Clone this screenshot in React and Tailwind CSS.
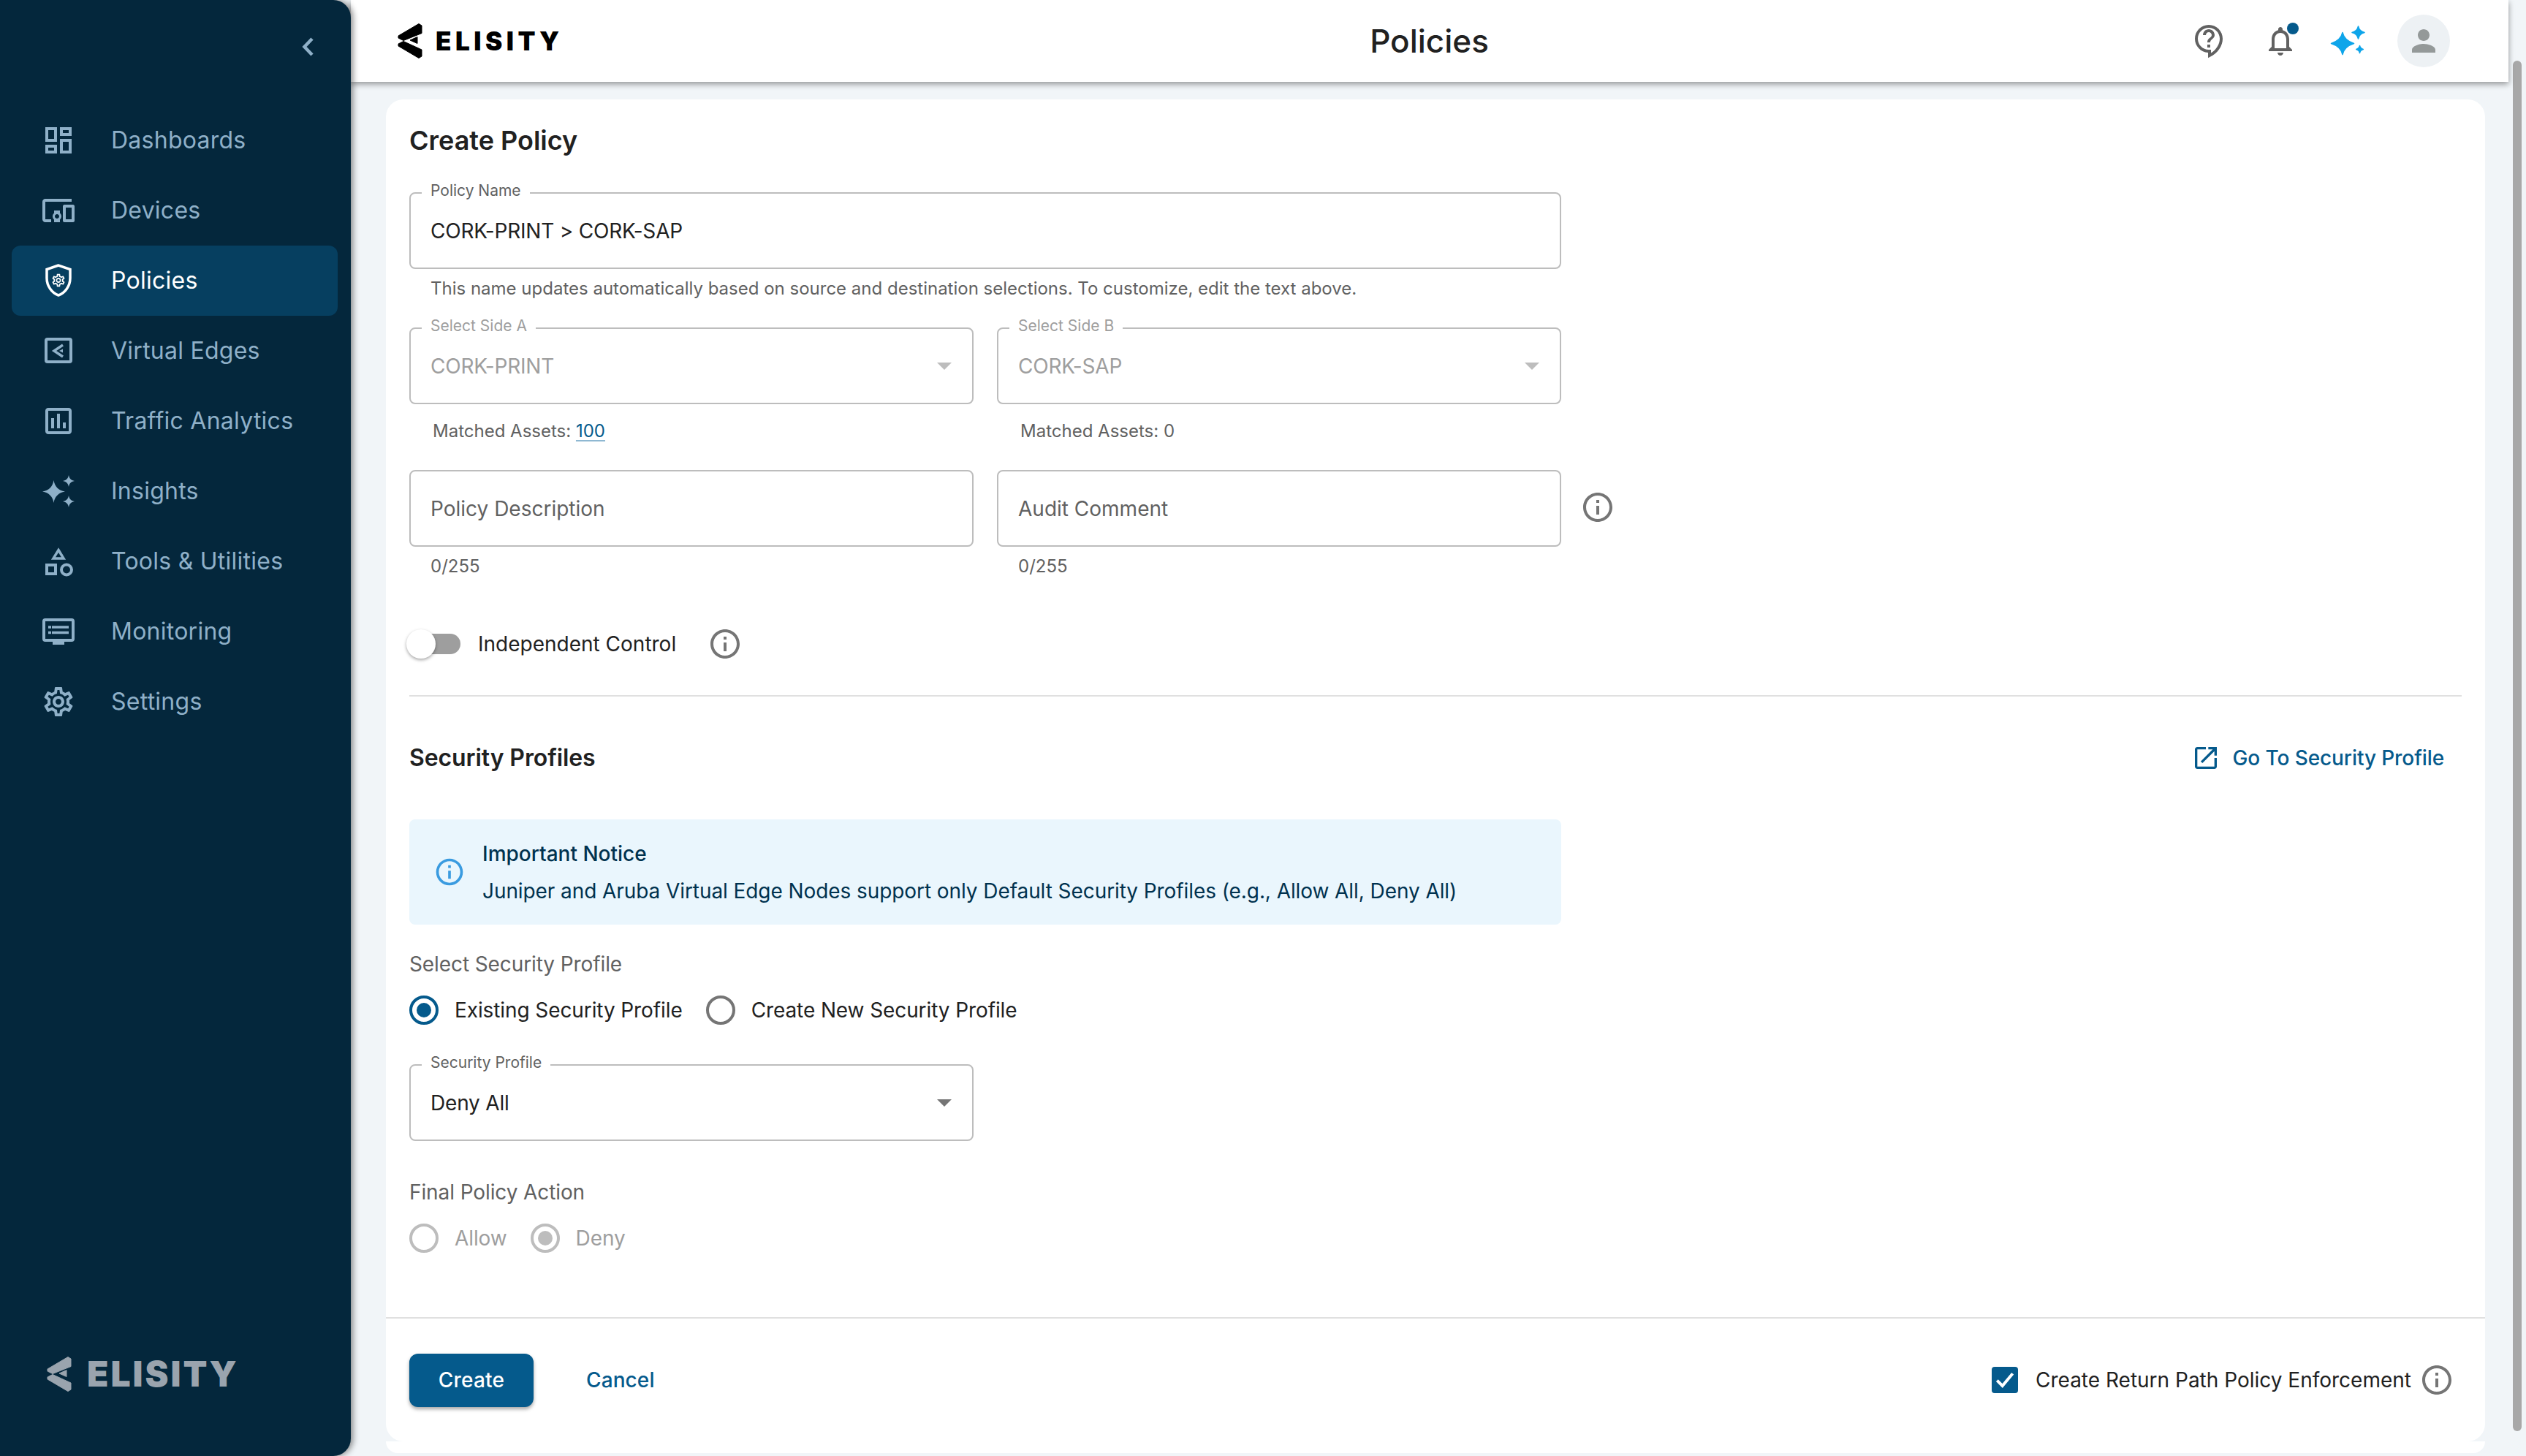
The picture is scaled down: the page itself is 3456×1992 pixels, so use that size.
const paths = {
  dashboard: "M19 5v2h-4V5h4M9 5v6H5V5h4m10 8v6h-4v-6h4M9 17v2H5v-2h4M21 3h-8v6h8V3zM11 3H3v10h8V3zm10 8h-8v10h8V11zm-10 4H3v6h8v-6z",
  devices: "M3 6h18V4H3c-1.1 0-2 .9-2 2v12c0 1.1.9 2 2 2h4v-2H3V6zm10 6H9v1.78c-.61.55-1 1.33-1 2.22s.39 1.67 1 2.22V20h4v-1.78c.61-.55 1-1.34 1-2.22s-.39-1.67-1-2.22V12zm-2 5.5c-.83 0-1.5-.67-1.5-1.5s.67-1.5 1.5-1.5 1.5.67 1.5 1.5-.67 1.5-1.5 1.5zM22 8h-6c-.5 0-1 .5-1 1v10c0 .5.5 1 1 1h6c.5 0 1-.5 1-1V9c0-.5-.5-1-1-1zm-1 10h-4v-8h4v8z",
  assessment: "M19 3H5c-1.1 0-2 .9-2 2v14c0 1.1.9 2 2 2h14c1.1 0 2-.9 2-2V5c0-1.1-.9-2-2-2zm0 16H5V5h14v14zM7 10h2v7H7zm4-3h2v10h-2zm4 6h2v4h-2z",
  settings: "M19.43 12.98c.04-.32.07-.64.07-.98 0-.34-.03-.66-.07-.98l2.11-1.65c.19-.15.24-.42.12-.64l-2-3.46c-.09-.16-.26-.25-.44-.25-.06 0-.12.01-.17.03l-2.49 1c-.52-.4-1.08-.73-1.69-.98l-.38-2.65C14.46 2.18 14.25 2 14 2h-4c-.25 0-.46.18-.49.42l-.38 2.65c-.61.25-1.17.59-1.69.98l-2.49-1c-.06-.02-.12-.03-.18-.03-.17 0-.34.09-.43.25l-2 3.46c-.13.22-.07.49.12.64l2.11 1.65c-.04.32-.07.65-.07.98 0 .33.03.66.07.98l-2.11 1.65c-.19.15-.24.42-.12.64l2 3.46c.09.16.26.25.44.25.06 0 .12-.01.17-.03l2.49-1c.52.4 1.08.73 1.69.98l.38 2.65c.03.24.24.42.49.42h4c.25 0 .46-.18.49-.42l.38-2.65c.61-.25 1.17-.59 1.69-.98l2.49 1c.06.02.12.03.18.03.17 0 .34-.09.43-.25l2-3.46c.12-.22.07-.49-.12-.64l-2.11-1.65zm-1.98-1.71c.04.31.05.52.05.73 0 .21-.02.43-.05.73l-.14 1.13.89.7 1.08.84-.7 1.21-1.27-.51-1.04-.42-.9.68c-.43.32-.84.56-1.25.73l-1.06.43-.16 1.13-.2 1.35h-1.4l-.19-1.35-.16-1.13-1.06-.43c-.43-.18-.83-.41-1.23-.71l-.91-.7-1.06.43-1.27.51-.7-1.21 1.08-.84.89-.7-.14-1.13c-.03-.31-.05-.54-.05-.74s.02-.43.05-.73l.14-1.13-.89-.7-1.08-.84.7-1.21 1.27.51 1.04.42.9-.68c.43-.32.84-.56 1.25-.73l1.06-.43.16-1.13.2-1.35h1.39l.19 1.35.16 1.13 1.06.43c.43.18.83.41 1.23.71l.91.7 1.06-.43 1.27-.51.7 1.21-1.07.85-.89.7.14 1.13zM12 8c-2.21 0-4 1.79-4 4s1.79 4 4 4 4-1.79 4-4-1.79-4-4-4zm0 6c-1.1 0-2-.9-2-2s.9-2 2-2 2 .9 2 2-.9 2-2 2z",
  help: "M11 23.59v-3.6c-5.01-.26-9-4.42-9-9.49C2 5.26 6.26 1 11.5 1S21 5.26 21 10.5c0 4.95-3.44 9.93-8.57 12.4l-1.43.69zM11.5 3C7.36 3 4 6.36 4 10.5S7.36 18 11.5 18H13v2.3c3.64-2.3 6-6.08 6-9.8C19 6.36 15.64 3 11.5 3zm-1 11.5h2v2h-2zm2-1.5h-2c0-3.25 3-3 3-5 0-1.1-.9-2-2-2s-2 .9-2 2h-2c0-2.21 1.79-4 4-4s4 1.79 4 4c0 2.5-3 2.75-3 5z",
  bell: "M12 22c1.1 0 2-.9 2-2h-4c0 1.1.9 2 2 2zm6-6v-5c0-3.07-1.63-5.64-4.5-6.32V4c0-.83-.67-1.5-1.5-1.5s-1.5.67-1.5 1.5v.68C7.64 5.36 6 7.92 6 11v5l-2 2v1h16v-1l-2-2zm-2 1H8v-6c0-2.48 1.51-4.5 4-4.5s4 2.02 4 4.5v6z",
  person: "M12 12c2.21 0 4-1.79 4-4s-1.79-4-4-4-4 1.79-4 4 1.79 4 4 4zm0 2c-2.67 0-8 1.34-8 4v2h16v-2c0-2.66-5.33-4-8-4z",
  info: "M11 7h2v2h-2zm0 4h2v6h-2zm1-9C6.48 2 2 6.48 2 12s4.48 10 10 10 10-4.48 10-10S17.52 2 12 2zm0 18c-4.41 0-8-3.59-8-8s3.59-8 8-8 8 3.59 8 8-3.59 8-8 8z",
  open: "M19 19H5V5h7V3H5c-1.11 0-2 .9-2 2v14c0 1.1.89 2 2 2h14c1.1 0 2-.9 2-2v-7h-2v7zM14 3v2h3.59l-9.83 9.83 1.41 1.41L19 6.41V10h2V3h-7z",
};

const Mi = ({ d, className }) => (
  <svg viewBox="0 0 24 24" fill="currentColor" className={className}>
    <path d={d} />
  </svg>
);

const ShieldIcon = ({ className }) => (
  <svg viewBox="0 0 48 48" fill="none" className={className}>
    <path d="M24 3 8 8.500v12C8 31 14.800 40.800 24 44c9.200-3.200 16-13 16-23.500v-12L24 3z" stroke="currentColor" strokeWidth="3.500" />
    <g transform="translate(13.500 13) scale(.875)">
      <path d={paths.settings} fill="currentColor" />
    </g>
  </svg>
);

const EdgeIcon = ({ className }) => (
  <svg viewBox="0 0 48 48" fill="none" className={className}>
    <rect x="7" y="8" width="34" height="31" rx="2" stroke="currentColor" strokeWidth="4" />
    <path d="M30 16 18 24l12 8" stroke="currentColor" strokeWidth="3.500" />
    <path d="M30 21.500 25 24l5 2.500z" fill="currentColor" />
  </svg>
);

const Sparkles = ({ className }) => (
  <svg viewBox="0 0 48 48" fill="currentColor" className={className}>
    <path d="M17.500 9c1.200 8.500 6.500 14 15.500 15.500-9 1.500-14.300 7-15.500 15.500C16.300 31.500 11 26 2 24.500 11 23 16.300 17.500 17.500 9z" />
    <path d="M38 2c.8 4.500 3 7 8 8-5 1-7.200 3.500-8 8-.8-4.500-3-7-8-8 5-1 7.200-3.500 8-8z" />
    <path d="M38 30c.8 4.500 3 7 8 8-5 1-7.200 3.500-8 8-.8-4.500-3-7-8-8 5-1 7.200-3.500 8-8z" />
  </svg>
);

const HeaderSparkles = ({ className }) => (
  <svg viewBox="0 0 48 42" fill="currentColor" stroke="currentColor" strokeWidth="1.500" strokeLinejoin="round" className={className}>
    <path d="M17 9.500c1.500 7 6 12 15.500 15-9.500 3-14 8-15.500 15-1.500-7-6-12-15.500-15 9.500-3 14-8 15.500-15z" />
    <path d="M38.500 1c.9 4.300 3.500 7.300 8.500 8.500-5 1.200-7.600 4.200-8.500 8.500-.9-4.300-3.500-7.300-8.500-8.500 5-1.200 7.600-4.200 8.500-8.500z" />
    <path d="M40.500 27.500c.5 2.500 2 4.200 4.800 5-2.800.8-4.300 2.500-4.800 5-.5-2.500-2-4.200-4.800-5 2.800-.8 4.300-2.500 4.800-5z" />
  </svg>
);

const ToolsIcon = ({ className }) => (
  <svg viewBox="0 0 48 48" fill="none" className={className}>
    <path d="M24 8.500 31 20H17z" stroke="currentColor" strokeWidth="3.500" />
    <rect x="8" y="29" width="12" height="12" stroke="currentColor" strokeWidth="4" />
    <circle cx="35" cy="35.500" r="7" stroke="currentColor" strokeWidth="4" />
  </svg>
);

const MonitorIcon = ({ className }) => (
  <svg viewBox="0 0 48 48" fill="none" className={className}>
    <rect x="4" y="8" width="40" height="28" rx="2" stroke="currentColor" strokeWidth="4" />
    <path d="M15 18h23M15 25.500h23M10 18h4M10 25.500h4" stroke="currentColor" strokeWidth="3.500" />
    <rect x="16" y="38" width="16" height="4" fill="currentColor" />
  </svg>
);

const nav = [
  { label: "Dashboards", icon: <Mi d={paths.dashboard} className="w-12 h-12" /> },
  { label: "Devices", icon: <Mi d={paths.devices} className="w-12 h-12" /> },
  { label: "Policies", icon: <ShieldIcon className="w-12 h-12" />, active: true },
  { label: "Virtual Edges", icon: <EdgeIcon className="w-12 h-12" /> },
  { label: "Traffic Analytics", icon: <Mi d={paths.assessment} className="w-12 h-12" /> },
  { label: "Insights", icon: <Sparkles className="w-12 h-12" /> },
  { label: "Tools & Utilities", icon: <ToolsIcon className="w-12 h-12" /> },
  { label: "Monitoring", icon: <MonitorIcon className="w-12 h-12" /> },
  { label: "Settings", icon: <Mi d={paths.settings} className="w-12 h-12" /> },
];

const LogoMark = ({ className }) => (
  <svg viewBox="0 0 36 48" className={className} fill="currentColor" stroke="currentColor" strokeWidth="1" strokeLinejoin="round">
    <path d="M29 .5 33 3v10.500L8 23.500 1 20v-3z" />
    <path d="M1 28 8 24.500 33 36v9l-4 2.500L1 31z" />
    <path d="M17 23l10-4.500v9z" />
  </svg>
);

const Field = ({ label, value, disabled, arrow, placeholder, tight }) => (
  <div className="relative h-[105px] border-2 border-[#bdbdbd] rounded-lg flex items-center pl-[27px] pr-5">
    {label && (
      <span className={`absolute -top-[18px] left-[15px] bg-white px-3 text-[21px] leading-[28px] ${disabled ? "text-[#9e9e9e]" : "text-[#616161]"}`}>
        {label}
      </span>
    )}
    <span className={`flex-1 text-[28px] ${tight ? "tracking-[-0.2px]" : ""} ${placeholder ? "text-[#616161]" : disabled ? "text-[#9e9e9e]" : "text-[#212121]"}`}>
      {value}
    </span>
    {arrow && <span className={`w-0 h-0 border-x-[10px] border-x-transparent border-t-[10px] mr-[8px] ${disabled ? "border-t-[#bdbdbd]" : "border-t-[#757575]"}`} />}
  </div>
);

const Radio = ({ checked, disabled, label, className }) => {
  const ring = disabled ? "border-[#bdbdbd]" : checked ? "border-[#055a8c]" : "border-[#757575]";
  const dot = disabled ? "bg-[#bdbdbd]" : "bg-[#055a8c]";
  return (
    <label className={`flex items-center gap-[22px] ${className || ""}`}>
      <span className={`w-10 h-10 rounded-full border-[4px] flex items-center justify-center ${ring}`}>
        {checked && <span className={`w-5 h-5 rounded-full ${dot}`} />}
      </span>
      <span className={`text-[28px] tracking-[-0.1px] ${disabled ? "text-[#9e9e9e]" : "text-[#212121]"}`}>{label}</span>
    </label>
  );
};

const SectionLabel = ({ children, className }) => (
  <div className={`text-[28px] leading-8 tracking-[-0.1px] text-[#616161] ${className}`}>{children}</div>
);

export default function App() {
  return (
    <div className="flex w-[3456px] h-[1992px] overflow-hidden bg-[#f1f5f8] font-[Inter,sans-serif]">
      {/* sidebar */}
      <aside className="relative z-20 w-[480px] shrink-0 bg-[#04273c] rounded-r-[24px] shadow-[3px_0_8px_rgba(0,0,0,0.45)] flex flex-col">
        <div className="h-[144px] flex justify-end items-start pt-[46px] pr-[47px] text-[#8fb0c8]">
          <svg viewBox="0 0 24 36" className="w-6 h-9" fill="none" stroke="currentColor" strokeWidth="4.500">
            <path d="M18 7 7.500 18 18 29" />
          </svg>
        </div>
        <nav className="flex flex-col tracking-[0.25px]">
          {nav.map((item) => (
            <div
              key={item.label}
              className={`mx-4 w-[446px] h-[96px] flex items-center pl-10 rounded-xl ${item.active ? "bg-[#063f60] text-white" : "text-[#8fb0c8]"}`}
            >
              <span className="w-12 h-12 shrink-0">{item.icon}</span>
              <span className="ml-12 text-[32px]">{item.label}</span>
            </div>
          ))}
        </nav>
        <div className="mt-auto pb-[88px] pl-[64px] text-[#9aa4ae] flex items-center">
          <LogoMark className="w-9 h-12 shrink-0" />
          <span className="ml-[19px] text-[48px] font-black leading-none tracking-[3px]">ELISITY</span>
        </div>
      </aside>

      {/* main column */}
      <div className="flex-1 min-w-0 flex flex-col">
        <header className="relative z-10 h-[112px] shrink-0 bg-white shadow-[0_3px_8px_rgba(0,0,0,0.4)] flex items-center pl-[64px] pr-[80px]">
          <div className="w-[240px] shrink-0 text-black flex items-center">
            <LogoMark className="w-9 h-12 shrink-0" />
            <span className="ml-4 text-[35px] font-black leading-none tracking-[5.500px]">ELISITY</span>
          </div>
          <h1 className="flex-1 text-center text-[44px] font-medium text-[#212121] pl-[128px]">Policies</h1>
          <div className="flex items-center text-[#616161]">
            <Mi d={paths.help} className="w-12 h-12" />
            <div className="relative ml-[49px]">
              <Mi d={paths.bell} className="w-12 h-12" />
              <span className="absolute -top-[1px] right-[-1px] w-4 h-4 rounded-full bg-[#055a8c]" />
            </div>
            <HeaderSparkles className="w-12 h-[42px] ml-[44px] text-[#0ea5ea]" />
            <div className="ml-[44px] w-[72px] h-[72px] rounded-full bg-[#edf1f4] flex items-center justify-center text-[#949999]">
              <Mi d={paths.person} className="w-12 h-12" />
            </div>
          </div>
        </header>

        <main className="flex-1 min-h-0 pt-6 pl-[48px] pr-8">
          <div className="h-[1836px] bg-white rounded-[24px] flex flex-col">
            <div className="flex-1 px-8 pt-8">
              <h2 className="text-[36px] leading-[48px] font-semibold text-[#212121]">Create Policy</h2>

              <div className="w-[1576px] mt-[47px]">
                <Field label="Policy Name" value="CORK-PRINT > CORK-SAP" tight />
              </div>
              <p className="mt-[11px] pl-[29px] text-[24px] leading-8 text-[#616161]">
                This name updates automatically based on source and destination selections. To customize, edit the text above.
              </p>

              <div className="w-[1576px] grid grid-cols-2 gap-8 mt-[37px]">
                <Field label="Select Side A" value="CORK-PRINT" disabled arrow tight />
                <Field label="Select Side B" value="CORK-SAP" disabled arrow tight />
              </div>
              <div className="w-[1576px] grid grid-cols-2 gap-8 mt-[21px] text-[24px] leading-8 text-[#616161]">
                <div className="pl-8">
                  Matched Assets: <span className="text-[#055a8c] underline decoration-[#8fb8d2] underline-offset-4">100</span>
                </div>
                <div className="pl-8">Matched Assets: 0</div>
              </div>

              <div className="flex items-center mt-[37px]">
                <div className="w-[1576px] grid grid-cols-2 gap-8">
                  <Field value="Policy Description" placeholder />
                  <Field value="Audit Comment" placeholder />
                </div>
                <Mi d={paths.info} className="w-12 h-12 ml-[26px] -mt-[4px] text-[#757575]" />
              </div>
              <div className="w-[1576px] grid grid-cols-2 gap-8 mt-[11px] text-[24px] leading-8 text-[#616161]">
                <div className="pl-[29px]">0/255</div>
                <div className="pl-[29px]">0/255</div>
              </div>

              <div className="flex items-center h-10 mt-[70px] -ml-1">
                <div className="relative w-[74px] h-10 flex items-center">
                  <div className="absolute left-[12px] right-0 h-7 rounded-full bg-[#9e9e9e]" />
                  <div className="relative w-10 h-10 rounded-full bg-white shadow-[0_2px_4px_rgba(0,0,0,0.35)]" />
                </div>
                <span className="ml-[24px] text-[28px] text-[#212121]">Independent Control</span>
                <Mi d={paths.info} className="w-12 h-12 ml-[43px] text-[#757575]" />
              </div>

              <div className="h-[2px] bg-[#e0e0e0] mt-[50px]" />

              <div className="flex items-center justify-between h-12 mt-[60px]">
                <h3 className="text-[32px] font-semibold tracking-[-0.1px] text-[#212121]">Security Profiles</h3>
                <div className="flex items-center text-[#055a8c] pr-6">
                  <Mi d={paths.open} className="w-10 h-10" />
                  <span className="ml-[17px] text-[28px] font-medium tracking-[-0.1px]">Go To Security Profile</span>
                </div>
              </div>

              <div className="w-[1576px] h-[144px] mt-[60px] bg-[#eaf6fd] rounded-lg flex items-center pl-[33px] text-[#00324f]">
                <Mi d={paths.info} className="w-11 h-11 text-[#3a9be0]" />
                <div className="ml-[23px]">
                  <div className="text-[28px] leading-[36px] font-medium">Important Notice</div>
                  <div className="text-[28px] leading-[36px] mt-[15px] tracking-[-0.08px]">Juniper and Aruba Virtual Edge Nodes support only Default Security Profiles (e.g., Allow All, Deny All)</div>
                </div>
              </div>

              <SectionLabel className="mt-[38px]">Select Security Profile</SectionLabel>
              <div className="flex items-center h-10 mt-[27px]">
                <Radio checked label="Existing Security Profile" />
                <Radio label="Create New Security Profile" className="ml-[32px]" />
              </div>

              <div className="w-[772px] mt-[54px]">
                <Field label="Security Profile" value="Deny All" arrow tight />
              </div>

              <SectionLabel className="mt-[54px]">Final Policy Action</SectionLabel>
              <div className="flex items-center h-10 mt-[27px]">
                <Radio disabled label="Allow" />
                <Radio disabled checked label="Deny" className="ml-[32px]" />
              </div>
            </div>

            <div className="h-[170px] shrink-0 border-t-2 border-[#e0e0e0] flex items-center px-8">
              <button className="w-[170px] h-[73px] rounded-xl bg-[#055a8c] text-white text-[28px] font-medium tracking-[0.2px] shadow-[0_3px_5px_rgba(0,0,0,0.35)]">Create</button>
              <button className="ml-[72px] text-[28px] font-medium tracking-[0.1px] text-[#055a8c]">Cancel</button>
              <div className="ml-auto flex items-center pr-[10px]">
                <span className="w-9 h-9 rounded bg-[#055a8c] flex items-center justify-center">
                  <svg viewBox="0 0 24 24" className="w-8 h-8" fill="none" stroke="white" strokeWidth="3">
                    <path d="M4 12.500 9.500 18 20 5.500" />
                  </svg>
                </span>
                <span className="ml-6 text-[28px] text-[#212121]">Create Return Path Policy Enforcement</span>
                <Mi d={paths.info} className="w-12 h-12 ml-[11px] text-[#757575]" />
              </div>
            </div>
          </div>
          <div className="h-4 bg-white rounded-b-[20px]" />
        </main>
      </div>

      {/* scrollbar */}
      <div className="w-6 shrink-0 pt-[83px] pl-[6px]">
        <div className="w-3 h-[1875px] rounded-full bg-[#a8a8a8]" />
      </div>
    </div>
  );
}
